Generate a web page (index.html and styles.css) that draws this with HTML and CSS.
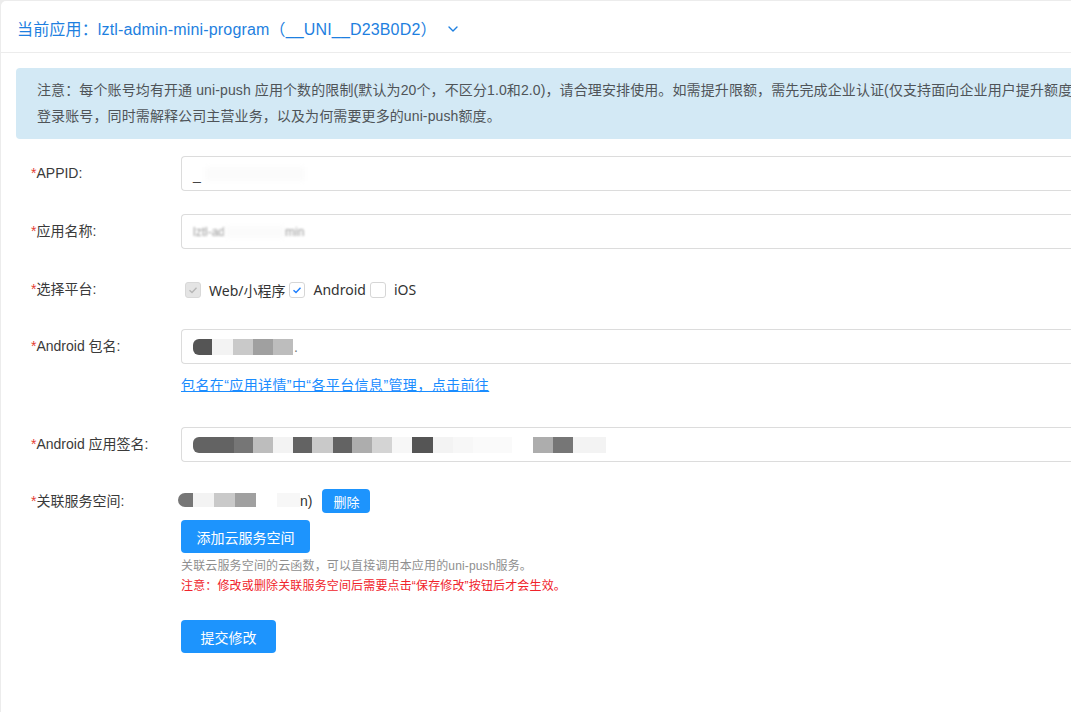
FILE: index.html
```html
<!DOCTYPE html>
<html lang="zh">
<head>
<meta charset="utf-8">
<title>uni-push 应用配置</title>
<link rel="stylesheet" href="styles.css">
</head>
<body>
<div class="card">
  <div class="head">
    <span class="title">当前应用：lztl-admin-mini-program（__UNI__D23B0D2）</span>
    <svg class="chev" width="12" height="12" viewBox="0 0 12 12"><polyline points="2,4 6,8 10,4" fill="none" stroke="#1e7fe0" stroke-width="1.4" stroke-linecap="round" stroke-linejoin="round"/></svg>
  </div>
  <div class="alert">
    <div class="line">注意：每个账号均有开通 uni-push 应用个数的限制(默认为20个，不区分1.0和2.0)，请合理安排使用。如需提升限额，需先完成企业认证(仅支持面向企业用户提升额度</div>
    <div class="line">登录账号，同时需解释公司主营业务，以及为何需要更多的uni-push额度。</div>
  </div>

  <div class="form">
    <div class="row r-appid">
      <label class="lbl"><span class="req">*</span>APPID:</label>
      <div class="field">
        <div class="input"><span class="val-under">_</span><span class="faint f-wide"></span></div>
      </div>
    </div>

    <div class="row r-name">
      <label class="lbl"><span class="req">*</span>应用名称:</label>
      <div class="field">
        <div class="input"><span class="blurtext">lztl-ad</span><span class="faint f-mid"></span><span class="blurtext">min</span></div>
      </div>
    </div>

    <div class="row r-plat">
      <label class="lbl"><span class="req">*</span>选择平台:</label>
      <div class="field checks">
        <span class="cb cb-disabled"><svg width="12" height="12" viewBox="0 0 12 12"><polyline points="2.5,6.2 5,8.5 9.5,3.8" fill="none" stroke="#b5b5b5" stroke-width="1.3"/></svg></span>
        <span class="cb-text">Web/小程序</span>
        <span class="cb"><svg width="12" height="12" viewBox="0 0 12 12"><polyline points="2.5,6.2 5,8.5 9.5,3.8" fill="none" stroke="#1a7dff" stroke-width="1.4"/></svg></span>
        <span class="cb-text">Android</span>
        <span class="cb"></span>
        <span class="cb-text">iOS</span>
      </div>
    </div>

    <div class="row r-pkg">
      <label class="lbl"><span class="req">*</span>Android 包名:</label>
      <div class="field">
        <div class="input">
          <span class="mosaic">
            <i class="b d1 w19 round"></i><i class="b l1 w21"></i><i class="b g2 w20"></i><i class="b g3 w20"></i><i class="b g1 w20"></i>
          </span><span class="dot">.</span>
        </div>
        <a class="help-link" href="#">包名在“应用详情”中“各平台信息”管理，点击前往</a>
      </div>
    </div>

    <div class="row r-sign">
      <label class="lbl"><span class="req">*</span>Android 应用签名:</label>
      <div class="field">
        <div class="input">
          <span class="mosaic">
            <i class="b d2 w41 round"></i><i class="b d3 w19"></i><i class="b g1 w20"></i><i class="b l1 w20"></i><i class="b d2 w19"></i><i class="b g2 w21"></i><i class="b d2 w19"></i><i class="b g3b w20"></i><i class="b g4 w20"></i><i class="b l2 w20"></i><i class="b d1 w21"></i><i class="b l1 w20"></i><i class="b l2 w20"></i><i class="b l3 w39"></i><i class="b none w21"></i><i class="b g3b w20"></i><i class="b d3 w20"></i><i class="b l1 w33"></i>
          </span>
        </div>
      </div>
    </div>

    <div class="row r-space">
      <label class="lbl"><span class="req">*</span>关联服务空间:</label>
      <div class="field">
        <div class="space-line">
          <span class="mosaic small">
            <i class="b d3 w15 roundfull"></i><i class="b l1 w21"></i><i class="b g2 w21"></i><i class="b g3 w21"></i><i class="b none w21"></i><i class="b l2 w23"></i>
          </span><span class="space-tail">n)</span>
          <button class="btn btn-mini">删除</button>
        </div>
        <button class="btn btn-add">添加云服务空间</button>
        <div class="tip">关联云服务空间的云函数，可以直接调用本应用的uni-push服务。</div>
        <div class="tip tip-red">注意：修改或删除关联服务空间后需要点击“保存修改”按钮后才会生效。</div>
      </div>
    </div>

    <div class="row r-submit">
      <div class="lbl"></div>
      <button class="btn btn-submit">提交修改</button>
    </div>
  </div>
</div>
</body>
</html>
```

FILE: styles.css
```css
html, body {
  margin: 0;
  padding: 0;
  background: #ececec;
  overflow: hidden;
  width: 1071px;
  height: 712px;
}
body {
  font-family: "Liberation Sans", "Noto Sans CJK SC", sans-serif;
  color: #333;
}
.card {
  margin: 1px 0 0 1px;
  width: 1110px;
  height: 711px;
  background: #fff;
  border-radius: 5px 0 0 0;
}
.head {
  display: flex;
  align-items: center;
  padding: 3px 0 0 16px;
  box-sizing: border-box;
  height: 52px;
  border-bottom: 1px solid #ececec;
}
.title {
  color: #1e7fe0;
  font-size: 16px;
  letter-spacing: 0.16px;
  white-space: nowrap;
}
.chev {
  margin-left: 10px;
  margin-top: 1px;
}
.alert {
  margin: 15px 0 0 15px;
  background: #d3e9f5;
  border-radius: 4px 0 0 4px;
  padding: 9px 21px 10px;
  font-size: 14px;
  line-height: 26px;
  letter-spacing: 0.11px;
  color: #4f5458;
}
.line {
  white-space: nowrap;
}
.form {
  padding-left: 30px;
  margin-top: 17px;
}
.row {
  display: flex;
  align-items: flex-start;
}
.lbl {
  width: 150px;
  flex: none;
  font-size: 14px;
  line-height: 35px;
  color: #3a3a3a;
  white-space: nowrap;
}
.req {
  color: #e43d33;
}
.field {
  flex: 1;
  display: flex;
  flex-direction: column;
  align-items: flex-start;
}
.input {
  width: 100%;
  height: 35px;
  box-sizing: border-box;
  border: 1px solid #dcdcdc;
  border-right: none;
  border-radius: 4px 0 0 4px;
  display: flex;
  align-items: center;
  padding-left: 11px;
  font-size: 14px;
  color: #333;
}
.r-appid, .r-name, .r-sign { margin-bottom: 23px; }
.r-plat { margin-bottom: 22px; }
.r-pkg { margin-bottom: 32px; }

.val-under {
  color: #444;
  margin-top: 2px;
}
.faint {
  display: inline-block;
  height: 14px;
  background: #fbfbfb;
  filter: blur(2px);
}
.f-wide { width: 100px; margin-left: 4px; }
.f-mid { width: 60px; height: 12px; }
.blurtext {
  color: #9a9a9a;
  font-size: 12px;
  filter: blur(0.8px);
}

.checks {
  flex-direction: row;
  align-items: center;
  height: 35px;
  font-size: 14px;
}
.cb {
  width: 16px;
  height: 16px;
  box-sizing: border-box;
  border: 1px solid #d6d6d6;
  border-radius: 3px;
  background: #fff;
  margin: 0 8px 0 4px;
  display: flex;
  align-items: center;
  justify-content: center;
}
.cb-disabled {
  background: #e4e4e4;
  border-color: #d8d8d8;
}
.cb-text {
  font-family: "Noto Sans", "Noto Sans CJK SC", sans-serif;
  color: #333;
}

.mosaic {
  display: flex;
  height: 16px;
}
.mosaic .b {
  display: block;
  height: 16px;
}
.mosaic.small .b {
  height: 14px;
}
.round { border-radius: 6px 0 0 6px; }
.roundfull { border-radius: 7px 0 0 7px; }
.d1 { background: #555; }
.d2 { background: #636363; }
.d3 { background: #767676; }
.g1 { background: #bdbdbd; }
.g2 { background: #c9c9c9; }
.g3 { background: #a0a0a0; }
.g3b { background: #adadad; }
.g4 { background: #d4d4d4; }
.l1 { background: #f3f3f3; }
.l2 { background: #f7f7f7; }
.l3 { background: #fafafa; }
.none { background: transparent; }
.w15 { width: 15px; }
.w19 { width: 19px; }
.w20 { width: 20px; }
.w21 { width: 21px; }
.w23 { width: 23px; }
.w33 { width: 33px; }
.w39 { width: 39px; }
.w41 { width: 41px; }
.dot {
  color: #777;
  margin-left: 1px;
}

.help-link {
  margin-top: 11px;
  font-size: 14px;
  line-height: 20px;
  letter-spacing: 0.4px;
  color: #1a8cff;
  text-decoration: underline;
}

.r-space .lbl {
  line-height: 32px;
}
.space-line {
  height: 32px;
  display: flex;
  align-items: center;
  font-size: 14px;
  margin-left: -3px;
}
.space-tail {
  color: #333;
}
.btn {
  font-family: "Liberation Sans", "Noto Sans CJK SC", sans-serif;
  background: #1d94fd;
  color: #fff;
  border: none;
  border-radius: 4px;
  font-size: 14px;
  cursor: pointer;
  padding: 0;
}
.btn-mini {
  width: 48px;
  height: 24px;
  font-size: 13px;
  margin-left: 10px;
}
.btn-add {
  margin-top: 3px;
  height: 33px;
  width: 129px;
}
.tip {
  font-size: 12px;
  line-height: 20px;
  letter-spacing: 0.15px;
  color: #8f8f8f;
}
.btn-add + .tip {
  margin-top: 3px;
}
.tip-red {
  color: #f0232b;
}
.r-submit {
  margin-top: 24px;
}
.btn-submit {
  width: 95px;
  height: 33px;
}
```
